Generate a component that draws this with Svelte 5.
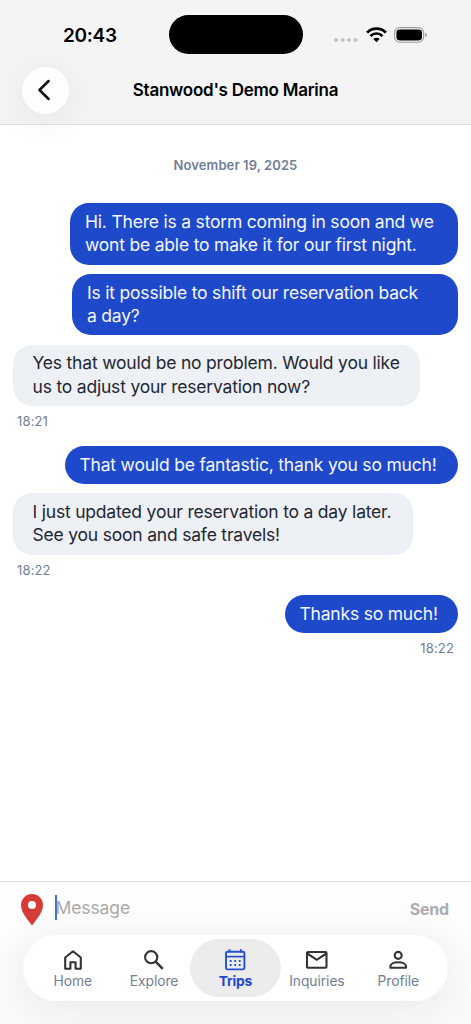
<script>
  let active = $state("Trips");

  const tabs = ["Home", "Explore", "Trips", "Inquiries", "Profile"];

  const messages = [
    {
      mine: true,
      width: 388,
      lines: ["Hi. There is a storm coming in soon and we", "wont be able to make it for our first night."],
    },
    {
      mine: true,
      width: 386,
      lines: ["Is it possible to shift our reservation back", "a day?"],
    },
    {
      mine: false,
      width: 407,
      lines: ["Yes that would be no problem. Would you like", "us to adjust your reservation now?"],
      time: "18:21",
    },
    {
      mine: true,
      width: 393.5,
      lines: ["That would be fantastic, thank you so much!"],
    },
    {
      mine: false,
      width: 400,
      lines: ["I just updated your reservation to a day later.", "See you soon and safe travels!"],
      time: "18:22",
    },
    {
      mine: true,
      width: 173.5,
      lines: ["Thanks so much!"],
      time: "18:22",
    },
  ];
</script>

<div class="screen">
  <header>
    <div class="status-bar">
      <span class="clock">20:43</span>
      <div class="island"></div>
      <div class="indicators">
        <svg class="dots" width="24" height="4" viewBox="0 0 24 4" fill="#c4c4c4">
          <circle cx="2" cy="2" r="2" />
          <circle cx="8.6" cy="2" r="2" />
          <circle cx="15" cy="2" r="2" />
          <circle cx="21.5" cy="2" r="2" />
        </svg>
        <svg class="wifi" width="21" height="16" viewBox="0 0 21 16">
          <g fill="none" stroke="#000" stroke-width="2.7">
            <path d="M1.1 5.6a13.3 13.3 0 0 1 18.8 0" />
            <path d="M4.5 9a8.5 8.5 0 0 1 12 0" />
          </g>
          <path d="M7.4 12a4.4 4.4 0 0 1 6.2 0L10.5 15.2z" />
        </svg>
        <svg width="34" height="16" viewBox="0 0 34 16">
          <rect x=".6" y=".6" width="29" height="14.6" rx="5" fill="none" stroke="#9c9c9c" stroke-width="1.1" />
          <rect x="2.4" y="2.4" width="25.6" height="11" rx="3.3" />
          <path d="M31.1 5.5c2.4.8 2.4 4 0 4.800z" fill="#9c9c9c" />
        </svg>
      </div>
    </div>
    <div class="title-bar">
      <button class="back" aria-label="Back">
        <svg width="14" height="22" viewBox="0 0 14 22">
          <path d="M11.600 2 2.500 11l9.100 9" fill="none" stroke="#111" stroke-width="2.500" stroke-linecap="round" stroke-linejoin="round" />
        </svg>
      </button>
      <h1>Stanwood's Demo Marina</h1>
    </div>
  </header>

  <main>
    <p class="date">November 19, 2025</p>
    {#each messages as message}
      <div class="message" class:mine={message.mine}>
        <div class="bubble" style="width: {message.width}px">
          {#each message.lines as line}
            <span>{line}</span>
          {/each}
        </div>
        {#if message.time}
          <time>{message.time}</time>
        {/if}
      </div>
    {/each}
  </main>

  <footer>
    <div class="composer">
      <svg class="pin" width="22" height="32" viewBox="0 0 22 32">
        <path fill="#d63c37" fill-rule="evenodd" d="M11 0A11 11 0 0 0 0 11c0 7.500 6.500 14.500 11 20.400C15.500 25.500 22 18.500 22 11A11 11 0 0 0 11 0zm0 7a4 4 0 1 1 0 8 4 4 0 0 1 0-8z" />
      </svg>
      <span class="caret"></span>
      <span class="placeholder">Message</span>
      <button class="send">Send</button>
    </div>

    <nav>
      {#each tabs as tab}
        <button class="tab" class:active={active === tab} onclick={() => (active = tab)}>
          <svg width="24" height="24" viewBox="0 0 24 24" fill="none" stroke="currentColor" stroke-width="2.100">
            {#if tab === "Home"}
              <path stroke-linejoin="round" d="M4.200 9.500 12 3.300l7.800 6.200v11.300h-5.200v-6.500H9.400v6.500H4.200z" />
            {:else if tab === "Explore"}
              <circle cx="9.200" cy="9.200" r="6.100" />
              <path d="m13.600 13.600 7.200 7.200" stroke-width="2.400" />
            {:else if tab === "Trips"}
              <rect x="3" y="3.800" width="18.400" height="17.600" rx="1.500" stroke-width="1.900" />
              <path d="M3 8.600h18.400" stroke-width="1.700" />
              <path d="M6.500 1.300v3M17.900 1.300v3" stroke-width="2" />
              <path d="M6.800 13h11.200M6.800 17h11.200" stroke-dasharray="1.800 2.700" stroke-width="1.800" />
            {:else if tab === "Inquiries"}
              <rect x="2" y="4" width="19.500" height="15.800" rx="1" />
              <path d="m2.200 5.500 9.600 6.300 9.600-6.300" />
            {:else}
              <circle cx="12.200" cy="7.400" r="3.500" />
              <path stroke-linejoin="round" d="M4.400 19.800v-1.500c0-2.500 3.700-4 7.800-4s7.800 1.500 7.800 4v1.500z" />
            {/if}
          </svg>
          <span>{tab}</span>
        </button>
      {/each}
    </nav>
  </footer>
</div>

<style>
  :global(body) {
    margin: 0;
    background: #fff;
  }

  .screen {
    width: 471px;
    height: 1024px;
    display: flex;
    flex-direction: column;
    overflow: hidden;
    background: #fff;
    font-family: Inter, "Liberation Sans", sans-serif;
  }

  button {
    border: 0;
    padding: 0;
    background: none;
    font: inherit;
  }

  header {
    height: 124px;
    flex: none;
    border-bottom: 1px solid #dcdcdc;
    background: #f4f4f4;
  }

  .status-bar {
    height: 65.5px;
    display: grid;
    grid-template-columns: 168.5px 134px 1fr;
    padding-top: 1px;
  }

  .clock {
    padding: 23px 0 0 63px;
    font-size: 19px;
    line-height: 24px;
    font-weight: 600;
    letter-spacing: -0.3px;
  }

  .island {
    height: 39px;
    margin-top: 14px;
    border-radius: 20px;
    background: #000;
  }

  .indicators {
    display: flex;
    align-items: flex-start;
    padding: 26px 0 0 31px;
  }

  .dots {
    margin: 11px 8px 0 0;
  }

  .wifi {
    margin-right: 7px;
  }

  .title-bar {
    display: grid;
    grid-template-columns: 47.5px 1fr 47.5px;
    align-items: center;
    padding: 0 21.5px;
  }

  .back {
    display: flex;
    align-items: center;
    justify-content: center;
    width: 47.5px;
    height: 47.5px;
    padding-right: 3px;
    border-radius: 50%;
    background: #fdfdfd;
    box-shadow: 0 6px 36px rgba(0, 0, 0, 0.07);
  }

  h1 {
    margin: 0 0 1px;
    text-align: center;
    font-size: 17px;
    font-weight: 600;
    letter-spacing: -0.25px;
    white-space: nowrap;
  }

  main {
    flex: 1;
    padding: 0 13px;
  }

  .date {
    margin: 31px 0 29px;
    text-align: center;
    color: #718096;
    font-size: 13px;
    line-height: 18px;
    font-weight: 600;
    letter-spacing: 0.1px;
  }

  .message {
    display: flex;
    flex-direction: column;
    align-items: flex-start;
    margin-bottom: 9.15px;
  }

  .mine {
    align-items: flex-end;
  }

  .bubble {
    box-sizing: border-box;
    padding: 6.8px 0 8px 19.5px;
    border-radius: 19px;
    background: #edf0f5;
    color: #1f2733;
    font-size: 17.5px;
    line-height: 23.4px;
    letter-spacing: -0.2px;
  }

  .bubble span {
    display: block;
    white-space: nowrap;
  }

  .mine .bubble {
    padding-left: 15px;
    background: #1f49cb;
    color: #f4f7ff;
  }

  time {
    margin: 6.2px 4px 6.5px;
    color: #718096;
    font-size: 13px;
    line-height: 18px;
    letter-spacing: 0.15px;
  }

  footer {
    height: 142px;
    flex: none;
    border-top: 1px solid #dedede;
    background: linear-gradient(#fff, #f9f9f9);
  }

  .composer {
    display: flex;
    height: 53px;
    padding: 0 22px 0 21px;
  }

  .pin {
    margin-top: 12px;
  }

  .caret {
    width: 2px;
    height: 25px;
    margin: 13px -1.5px 0 12px;
    background: #4770d8;
  }

  .placeholder {
    flex: 1;
    padding-top: 14px;
    color: #a9a9ab;
    font-size: 17.5px;
    line-height: 24px;
    letter-spacing: -0.1px;
  }

  .send {
    align-self: flex-start;
    margin-top: 17px;
    color: #acacae;
    font-size: 16px;
    line-height: 20px;
    font-weight: 700;
    letter-spacing: -0.2px;
  }

  nav {
    display: grid;
    grid-template-columns: repeat(5, 1fr);
    height: 66px;
    box-sizing: border-box;
    margin: 0 23px;
    padding: 4px 9px;
    border-radius: 33px;
    background: #fff;
    box-shadow: 0 4px 40px rgba(0, 0, 0, 0.08);
  }

  .tab {
    display: flex;
    flex-direction: column;
    align-items: center;
    margin: 0 -5px;
    padding-top: 9px;
    color: #333;
  }

  .tab span {
    color: #718096;
    font-size: 13.8px;
    line-height: 18px;
    letter-spacing: -0.05px;
  }

  .active {
    border-radius: 29px;
    background: #ececec;
    color: #2450cf;
  }

  .active span {
    color: #1f49cb;
    font-weight: 700;
    letter-spacing: -0.2px;
  }
</style>
